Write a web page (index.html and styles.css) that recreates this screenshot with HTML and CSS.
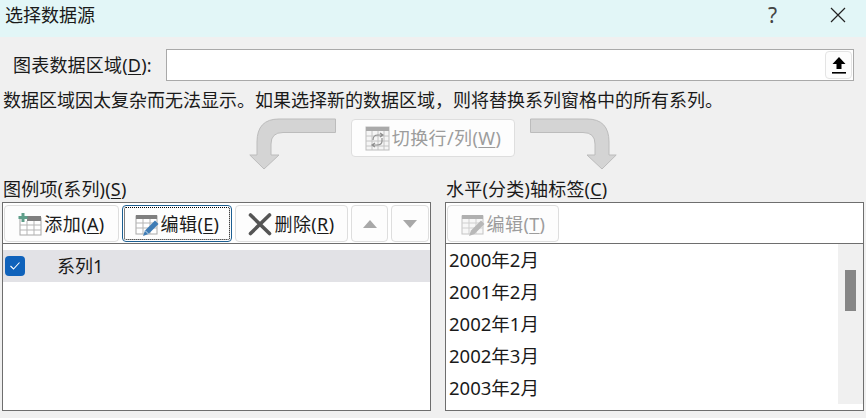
FILE: index.html
```html
<!DOCTYPE html>
<html lang="zh-CN">
<head>
    <meta charset="UTF-8">
    <title>选择数据源</title>
    <link rel="stylesheet" href="styles.css">
</head>
<body>
    <!-- Barra de titulo -->
    <div class="title-bar">
        <span class="title-text">选择数据源</span>
        <span class="help-btn">?</span>
        <svg class="close-btn" width="16" height="16" viewBox="0 0 16 16"><path d="M1 1L15 15M15 1L1 15" stroke="#222" stroke-width="1.2" fill="none"/></svg>
    </div>

    <!-- Rango de datos -->
    <div class="range-row">
        <label class="range-label">图表数据区域(<u>D</u>):</label>
        <div class="range-input">
            <div class="collapse-btn">
                <svg width="16" height="20" viewBox="0 0 16 20"><path d="M8 2L14.5 9H10.5V14H5.5V9H1.5Z" fill="#000"/><rect x="1" y="17" width="14" height="1.6" fill="#000"/></svg>
            </div>
        </div>
    </div>
    <div class="info-line">数据区域因太复杂而无法显示。如果选择新的数据区域，则将替换系列窗格中的所有系列。</div>

    <!-- Flechas y boton de cambio -->
    <div class="switch-row">
        <svg class="bent-arrow" width="87" height="52" viewBox="0 0 87 52"><path d="M86.5 1V14.5H34Q22 14.5 22 26V37H30L15 51L0.8 37H8V24Q8 1 30 1Z" fill="#d4d4d4" stroke="#bcbcbc"/></svg>
        <div class="btn switch-btn disabled">
            <svg width="25" height="25" viewBox="0 0 25 25">
                <rect x="1" y="1" width="23" height="23" fill="#f5f5f5" stroke="#bdbdbd"/>
                <rect x="1" y="1" width="23" height="4" fill="#a9a9a9"/>
                <path d="M1 10H24M1 15H24M1 20H24M7 5V24M13 5V24M19 5V24" stroke="#c4c4c4" fill="none"/>
                <path d="M8 14Q8 9 13 9H17M15 7L18 9L15 11M17 12V15Q17 19 12 19H8M10 17L7 19L10 21" stroke="#8f8f8f" stroke-width="1.2" fill="none"/>
            </svg>
            <span>切换行/列(<u>W</u>)</span>
        </div>
        <svg class="bent-arrow flipped" width="87" height="52" viewBox="0 0 87 52"><path d="M86.5 1V14.5H34Q22 14.5 22 26V37H30L15 51L0.8 37H8V24Q8 1 30 1Z" fill="#d4d4d4" stroke="#bcbcbc"/></svg>
    </div>

    <!-- Paneles -->
    <div class="panels">
        <section class="panel-col">
            <div class="panel-title">图例项(系列)(<u>S</u>)</div>
            <div class="panel">
                <div class="toolbar">
                    <div class="btn btn-add">
                        <svg width="24" height="24" viewBox="0 0 24 24">
                            <rect x="2" y="6" width="21" height="17" fill="#fff" stroke="#a8a8a8"/>
                            <rect x="9" y="4" width="14" height="5" fill="#7f7f7f"/>
                            <path d="M2 13H23M2 18H23M9 9V23M16 9V23" stroke="#b5b5b5" fill="none"/>
                            <path d="M5 1V10M0.5 5.5H9.5" stroke="#5f9e8a" stroke-width="3" fill="none"/>
                        </svg>
                        <span>添加(<u>A</u>)</span>
                    </div>
                    <div class="btn btn-edit focused">
                        <svg width="24" height="24" viewBox="0 0 24 24">
                            <rect x="1" y="4" width="21" height="18" fill="#fff" stroke="#a8a8a8"/>
                            <rect x="1" y="3" width="21" height="4" fill="#7f7f7f"/>
                            <path d="M1 11H22M1 16H22M8 7V22M15 7V22" stroke="#b5b5b5" fill="none"/>
                            <path d="M8 24L10 18.5L20 8.5L23.5 12L13.5 22Z" fill="#3f7cb5"/>
                            <path d="M10 18.5L13.5 22" stroke="#cfe0ef" fill="none"/>
                        </svg>
                        <span>编辑(<u>E</u>)</span>
                    </div>
                    <div class="btn btn-delete">
                        <svg width="24" height="24" viewBox="0 0 24 24"><path d="M2.5 3L21.5 21.5M21.5 3L2.5 21.5" stroke="#555" stroke-width="3.6" stroke-linecap="round" fill="none"/></svg>
                        <span>删除(<u>R</u>)</span>
                    </div>
                    <div class="btn btn-up"><span class="tri tri-up"></span></div>
                    <div class="btn btn-down"><span class="tri tri-down"></span></div>
                </div>
                <div class="series-list">
                    <div class="series-row">
                        <span class="check">
                            <svg width="12" height="10" viewBox="0 0 12 10"><path d="M1.5 5L4.5 8L10.5 1.5" stroke="#fff" stroke-width="1.1" fill="none"/></svg>
                        </span>
                        <span>系列1</span>
                    </div>
                </div>
            </div>
        </section>
        <section class="panel-col">
            <div class="panel-title">水平(分类)轴标签(<u>C</u>)</div>
            <div class="panel">
                <div class="toolbar">
                    <div class="btn btn-axis disabled">
                        <svg width="24" height="24" viewBox="0 0 24 24">
                            <rect x="1" y="4" width="21" height="18" fill="#f7f7f7" stroke="#c4c4c4"/>
                            <rect x="1" y="3" width="21" height="4" fill="#b0b0b0"/>
                            <path d="M1 11H22M1 16H22M8 7V22M15 7V22" stroke="#cfcfcf" fill="none"/>
                            <path d="M8 24L10 18.5L20 8.5L23.5 12L13.5 22Z" fill="#b8b8b8"/>
                        </svg>
                        <span>编辑(<u>T</u>)</span>
                    </div>
                </div>
                <div class="axis-body">
                    <ul class="axis-list">
                        <li>2000年2月</li>
                        <li>2001年2月</li>
                        <li>2002年1月</li>
                        <li>2002年3月</li>
                        <li>2003年2月</li>
                    </ul>
                    <div class="scroll-track"><div class="scroll-thumb"></div></div>
                </div>
            </div>
        </section>
    </div>
</body>
</html>
```

FILE: styles.css
```css
/* Estilos base */
body {
    margin: 0;
    padding: 0;
    width: 866px;
    height: 418px;
    overflow: hidden;
    background: #f0f0f0;
    color: #1a1a1a;
    font-family: "Noto Sans", "Noto Sans CJK SC", sans-serif;
    font-size: 18px;
    line-height: 24px;
}

u {
    text-underline-offset: 2px;
    text-decoration-thickness: 1px;
}

/* Barra de titulo */
.title-bar {
    display: flex;
    align-items: center;
    height: 37px;
    padding: 0 20px 7px 5px;
    box-sizing: border-box;
    background: #e2f6f7;
}

.title-text {
    flex: 1;
}

.help-btn {
    width: 12px;
    margin-right: 50px;
    margin-left: -3px;
    font-size: 21px;
    color: #444;
}

/* Rango de datos */
.range-row {
    display: flex;
    align-items: center;
    height: 32px;
    margin-top: 12px;
    padding-left: 13px;
}

.range-label {
    width: 153px;
    letter-spacing: 0.2px;
}

.range-input {
    display: flex;
    justify-content: flex-end;
    align-items: center;
    width: 688px;
    height: 32px;
    padding-right: 1px;
    box-sizing: border-box;
    background: #fff;
    border: 1px solid #a9a9a9;
}

.collapse-btn {
    display: flex;
    justify-content: center;
    align-items: center;
    width: 27px;
    height: 28px;
    background: #fdfdfd;
    border: 1px solid #e4e4e4;
    border-radius: 4px;
    box-sizing: border-box;
}

.info-line {
    margin-top: 7px;
    padding-left: 3px;
    white-space: nowrap;
}

/* Botones */
.btn {
    display: flex;
    justify-content: center;
    align-items: center;
    gap: 2px;
    height: 37px;
    box-sizing: border-box;
    background: #fdfdfd;
    border: 1px solid #dedede;
    border-radius: 4px;
    white-space: nowrap;
    letter-spacing: 0.4px;
}

.btn.disabled {
    color: #9c9c9c;
}

.btn.focused {
    border-color: #1d5f92;
    outline: 1px dotted #000;
    outline-offset: -3px;
}

/* Flechas y boton de cambio */
.switch-row {
    display: flex;
    justify-content: center;
    gap: 15px;
    height: 52px;
    margin-top: 6px;
}

.switch-btn {
    width: 164px;
    height: 38px;
    margin-top: 1px;
}

.flipped {
    transform: scaleX(-1);
}

/* Paneles */
.panels {
    display: grid;
    grid-template-columns: 429px 419px;
    gap: 14px;
    margin-top: 7px;
    padding-left: 2px;
}

.panel-title {
    height: 25px;
    padding-left: 1px;
    white-space: nowrap;
    letter-spacing: 0.2px;
}

.panel {
    height: 209px;
    box-sizing: border-box;
    background: #fff;
    border: 1px solid #6e6e6e;
}

.toolbar {
    display: flex;
    gap: 3px;
    height: 41px;
    padding: 2px 1px;
    box-sizing: border-box;
    border-bottom: 1px solid #6e6e6e;
}

.btn-add {
    width: 115px;
}

.btn-edit {
    width: 110px;
}

.btn-delete {
    width: 113px;
}

.btn-up {
    width: 37px;
}

.btn-down {
    width: 38px;
}

.btn-axis {
    width: 112px;
}

.tri {
    width: 0;
    height: 0;
    border-left: 7px solid transparent;
    border-right: 7px solid transparent;
}

.tri-up {
    border-bottom: 8px solid #a8a8a8;
}

.tri-down {
    border-top: 8px solid #a8a8a8;
}

/* Lista de series */
.series-list {
    padding-top: 6px;
}

.series-row {
    display: flex;
    align-items: center;
    height: 32px;
    padding-left: 2px;
    background: #e2e2e6;
}

.check {
    display: flex;
    justify-content: center;
    align-items: center;
    width: 20px;
    height: 20px;
    margin-right: 32px;
    background: #0f62bb;
    border-radius: 4px;
}

/* Lista de etiquetas */
.axis-body {
    display: flex;
    justify-content: space-between;
}

.axis-list {
    margin: 0;
    padding: 0 0 0 3px;
    list-style: none;
    font-size: 18.5px;
}

.axis-list li {
    height: 32px;
    line-height: 32px;
}

.scroll-track {
    width: 25px;
    height: 160px;
    padding: 26px 7px 0;
    box-sizing: border-box;
    background: #f0f0f0;
}

.scroll-thumb {
    width: 11px;
    height: 41px;
    background: #868686;
}
```
